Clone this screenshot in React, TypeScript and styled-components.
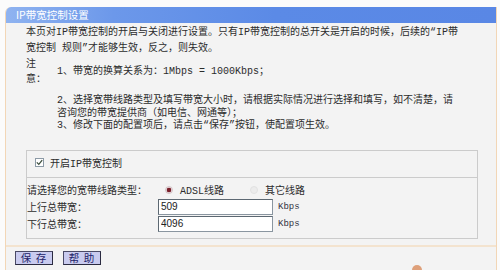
import React from 'react';
import styled, { createGlobalStyle } from 'styled-components';

const GlobalStyle = createGlobalStyle`
  html, body {
    margin: 0;
    padding: 0;
    background: #fbfbfb;
  }
  body {
    width: 500px;
    height: 270px;
    overflow: hidden;
    font-family: "Liberation Mono", "Noto Sans CJK SC", monospace;
  }
`;

const Panel = styled.div`
  position: relative;
  margin: 7px 3px 0 5px;
  height: 263px;
  box-sizing: border-box;
  border-left: 1px solid #f2d6b6;
  border-right: 1px solid #f2d6b6;
  border-radius: 6px 0 0 0;
  background: #f3f3f3;
  overflow: hidden;
`;

const TitleBar = styled.div`
  height: 16px;
  padding-left: 10px;
  background: linear-gradient(to right, #8fb3f0 0%, #6c98ea 22%, #5b8ae6 55%, #5987e5 100%);
  color: #fff;
  font-family: "Noto Sans CJK SC", sans-serif;
  font-size: 10.5px;
  line-height: 16px;
`;

const Body = styled.div`
  padding: 2px 18px 0 20px;
  font-size: 10px;
  color: #2c2c2c;
  white-space: nowrap;
`;

const Intro = styled.p`
  margin: 0;
  line-height: 16px;
`;

const Notes = styled.div`
  display: grid;
  grid-template-columns: 31px 1fr;
  row-gap: 8px;
`;

const NoteLabel = styled.div`
  line-height: 15px;
`;

const NoteItem = styled.div`
  align-self: center;
  line-height: 12.5px;
`;

const SwitchBox = styled.div`
  margin-top: 17px;
  height: 28px;
  box-sizing: border-box;
  border: 1px solid #cbcbcb;
  display: flex;
  align-items: center;
  gap: 6px;
  padding: 0 0 2px 8px;
`;

const CheckBox = styled.span`
  width: 9px;
  height: 9px;
  box-sizing: border-box;
  border: 1px solid #8c9aa6;
  background: #fff;
  display: inline-flex;
  align-items: center;
  justify-content: center;
`;

const LineBox = styled.div`
  border: 1px solid #cbcbcb;
  border-top: none;
  padding: 4px 0 6px 0;
  display: grid;
  grid-template-columns: 131px auto 1fr;
  grid-auto-rows: 16px;
  row-gap: 1px;
  align-items: center;
`;

const RadioGroup = styled.div`
  grid-column: 2 / 4;
  display: flex;
  align-items: center;
`;

const Radio = styled.span<{ $on?: boolean }>`
  width: 8px;
  height: 8px;
  border-radius: 50%;
  box-sizing: border-box;
  margin-left: ${(p) => (p.$on ? '7px' : '26px')};
  border: 1px solid ${(p) => (p.$on ? '#d3c5c8' : '#e2e2e2')};
  background: ${(p) =>
    p.$on ? 'radial-gradient(circle, #7a1f2a 0 2px, #e6d6da 2.6px)' : '#ececec'};
`;

const RadioLabel = styled.span`
  margin-left: 7px;
`;

const NumInput = styled.input`
  width: 115px;
  height: 16px;
  box-sizing: border-box;
  margin: 0;
  padding: 0 2px;
  border: 1px solid #8a96a0;
  border-top-color: #5c6872;
  border-left-color: #5c6872;
  background: #fff;
  color: #222;
  font: 10px "Liberation Sans", sans-serif;
  outline: none;
`;

const Unit = styled.span`
  margin-left: 5px;
  font-size: 9px;
  color: #333344;
`;

const Footer = styled.div`
  margin-top: 6px;
  border-top: 2px solid #f3e3cf;
  padding: 4px 0 0 9px;
  display: flex;
  gap: 10px;
`;

const Button = styled.button`
  width: 38px;
  height: 14px;
  padding: 0;
  box-sizing: border-box;
  border: 1px solid #4a4a66;
  border-right-color: #2a2a40;
  border-bottom-color: #2a2a40;
  background: #c9cbef;
  color: #24246a;
  font-family: "Noto Sans CJK SC", sans-serif;
  font-size: 10.5px;
  line-height: 12px;
  letter-spacing: 1px;
  white-space: pre;
`;

const Dot = styled.span`
  position: absolute;
  left: 406px;
  bottom: -5px;
  width: 10px;
  height: 10px;
  border-radius: 50%;
  background: #dea07a;
`;

export default function App() {
  return (
    <>
      <GlobalStyle />
      <Panel>
        <TitleBar>IP带宽控制设置</TitleBar>
        <Body>
          <Intro>
            本页对IP带宽控制的开启与关闭进行设置。只有IP带宽控制的总开关是开启的时候，后续的“IP带
            <br />
            宽控制 规则”才能够生效，反之，则失效。
          </Intro>
          <Notes>
            <NoteLabel>
              注
              <br />
              意：
            </NoteLabel>
            <NoteItem>1、带宽的换算关系为：1Mbps = 1000Kbps；</NoteItem>
            <div />
            <NoteItem>
              2、选择宽带线路类型及填写带宽大小时，请根据实际情况进行选择和填写，如不清楚，请
              <br />
              咨询您的带宽提供商（如电信、网通等）；
              <br />
              3、修改下面的配置项后，请点击“保存”按钮，使配置项生效。
            </NoteItem>
          </Notes>
          <SwitchBox>
            <CheckBox>
              <svg width="7" height="7" viewBox="0 0 7 7">
                <polyline points="0.8,3.4 2.8,5.4 6.2,1.2" fill="none" stroke="#3d4f3d" strokeWidth="1.3" />
              </svg>
            </CheckBox>
            <span>开启IP带宽控制</span>
          </SwitchBox>
          <LineBox>
            <span>请选择您的宽带线路类型：</span>
            <RadioGroup>
              <Radio $on />
              <RadioLabel>ADSL线路</RadioLabel>
              <Radio />
              <RadioLabel>其它线路</RadioLabel>
            </RadioGroup>
            <span>上行总带宽：</span>
            <NumInput readOnly defaultValue="509" />
            <Unit>Kbps</Unit>
            <span>下行总带宽：</span>
            <NumInput readOnly defaultValue="4096" />
            <Unit>Kbps</Unit>
          </LineBox>
        </Body>
        <Footer>
          <Button>保 存</Button>
          <Button>帮 助</Button>
        </Footer>
        <Dot />
      </Panel>
    </>
  );
}
